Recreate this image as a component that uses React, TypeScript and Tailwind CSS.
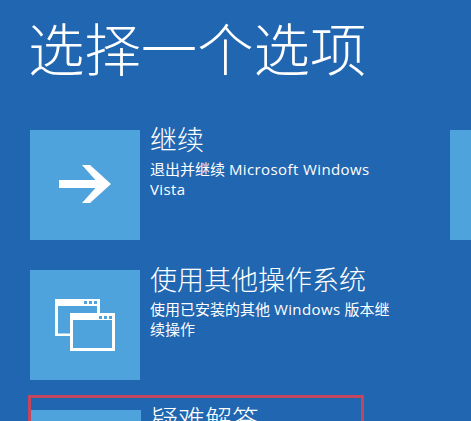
const fontStack = "font-['Open_Sans','Noto_Sans_CJK_SC',sans-serif]";

function ArrowIcon() {
  return (
    <svg width="110" height="110" viewBox="0 0 110 110" fill="#fff">
      <path d="M29 50h42v8H29z" />
      <path d="M52 35h8l21 19-21 19h-8l17-19z" />
    </svg>
  );
}

function WindowsIcon() {
  return (
    <svg width="110" height="110" viewBox="0 0 110 110" fill="none">
      <path d="M25 29h45v15h-3v-8H28v27.500h12V66H25z" fill="#fff" />
      <path d="M40 43h45v38H40z" fill="#fff" />
      <path d="M43 50h39v28H43z" fill="#4fa3dd" />
      <path d="M54 31h3v3h-3zM59 31h3v3h-3zM64 31h3v3h-3z" fill="#4fa3dd" />
      <path d="M69 46h3v3h-3zM74 46h3v3h-3zM79 46h3v3h-3z" fill="#4fa3dd" />
    </svg>
  );
}

function Tile({ children }: { children?: React.ReactNode }) {
  return <div className="h-[110px] w-[110px] shrink-0 bg-[#4fa3dd]">{children}</div>;
}

function Latin({ children }: { children: string }) {
  return <span className="tracking-[0.4px]">{children}</span>;
}

function Option({ icon, title, desc }: { icon?: React.ReactNode; title: string; desc?: React.ReactNode }) {
  return (
    <div className="flex gap-[10px]">
      <Tile>{icon}</Tile>
      <div className="w-[250px] shrink-0 text-white">
        <div className="-mt-[9px] h-[38px] text-[27px] leading-[38px] font-light whitespace-nowrap">{title}</div>
        {desc && <p className="text-[15px] leading-[20px]">{desc}</p>}
      </div>
    </div>
  );
}

export default function App() {
  return (
    <div className={`h-[421px] w-[471px] overflow-hidden bg-[#2166b0] pl-[30px] ${fontStack}`}>
      <h1 className="-ml-[2px] pt-[12px] text-[56.400px] leading-[76px] font-light text-white whitespace-nowrap">选择一个选项</h1>
      <div className="mt-[42px] flex">
        <Option
          icon={<ArrowIcon />}
          title="继续"
          desc={
            <>
              退出并继续 <Latin>Microsoft Windows Vista</Latin>
            </>
          }
        />
        <div className="ml-[50px] shrink-0">
          <Tile />
        </div>
      </div>
      <div className="mt-[30px]">
        <Option
          icon={<WindowsIcon />}
          title="使用其他操作系统"
          desc={
            <>
              使用已安装的其他 <Latin>Windows</Latin> 版本继续操作
            </>
          }
        />
      </div>
      <div className="mt-[15px] -ml-[2px] w-[336px] border-[3px] border-[#c4465e] pt-[12px]">
        <Option title="疑难解答" />
      </div>
    </div>
  );
}
